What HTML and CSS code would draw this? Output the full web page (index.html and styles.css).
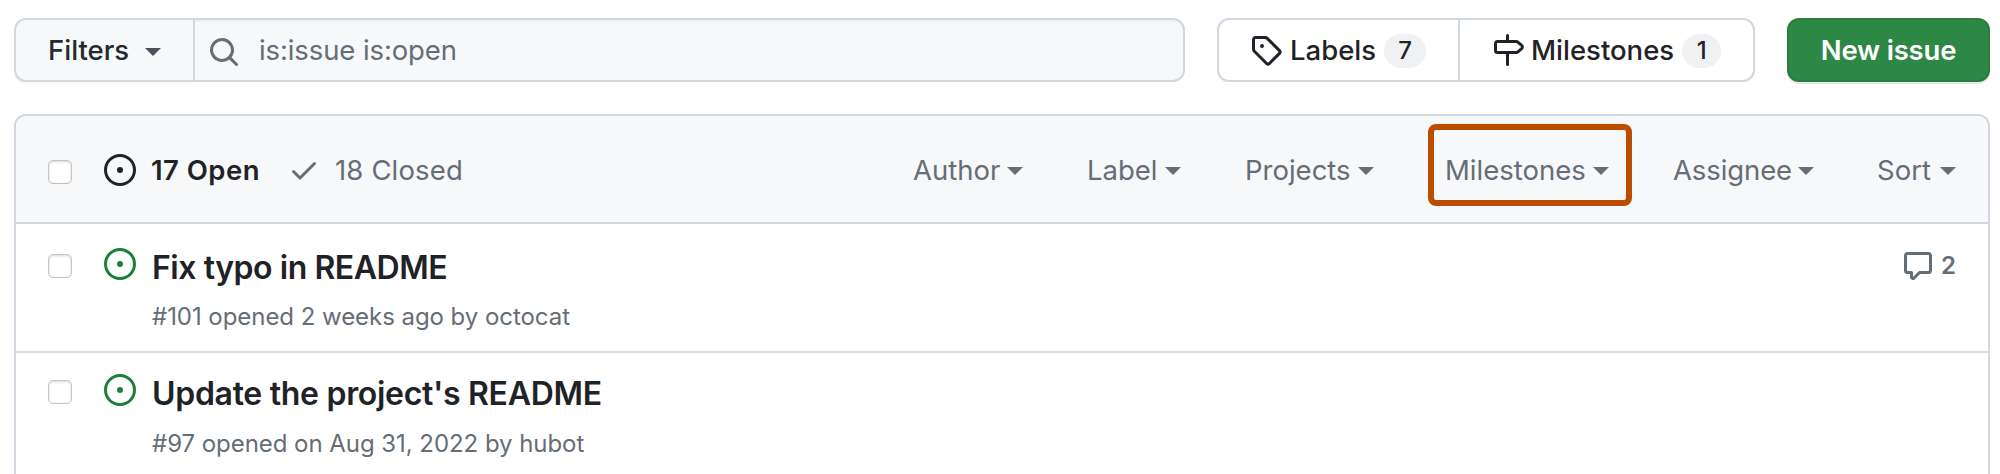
FILE: index.html
```html
<!DOCTYPE html>
<html lang="en">
<head>
<meta charset="utf-8">
<title>Issues</title>
<link rel="stylesheet" href="styles.css">
</head>
<body>
<svg class="sprite" aria-hidden="true">
  <symbol id="issue" viewBox="0 0 16 16"><path d="M8 9.5a1.5 1.5 0 100-3 1.5 1.5 0 000 3z"/><path fill-rule="evenodd" d="M8 0a8 8 0 110 16A8 8 0 018 0zM1.5 8a6.5 6.5 0 1013 0 6.5 6.5 0 00-13 0z"/></symbol>
  <symbol id="caret" viewBox="0 0 16 8"><path d="M0 0h16L8 8z"/></symbol>
</svg>
<div class="toolbar">
  <div class="search">
    <button class="filters"><span class="t-filters">Filters</span><svg class="caret"><use href="#caret"/></svg></button>
    <div class="query">
      <svg class="icon" viewBox="0 0 16 16"><path fill-rule="evenodd" d="M11.5 7a4.5 4.5 0 11-9 0 4.5 4.5 0 019 0zm-.82 4.74a6 6 0 111.06-1.06l3.04 3.04a.75.75 0 11-1.06 1.06l-3.04-3.04z"/></svg>
      <span class="t-query">is:issue is:open</span>
    </div>
  </div>
  <nav class="subnav">
    <a class="sub labels"><svg class="icon" viewBox="0 0 16 16"><path fill-rule="evenodd" d="M2.5 7.775V2.75a.25.25 0 01.25-.25h5.025a.25.25 0 01.177.073l6.25 6.25a.25.25 0 010 .354l-5.025 5.025a.25.25 0 01-.354 0l-6.25-6.25a.25.25 0 01-.073-.177zm-1.5 0V2.75C1 1.784 1.784 1 2.75 1h5.025c.464 0 .91.184 1.238.513l6.25 6.25a1.75 1.75 0 010 2.474l-5.026 5.026a1.75 1.75 0 01-2.474 0l-6.25-6.25A1.75 1.75 0 011 7.775zM6 5a1 1 0 100 2 1 1 0 000-2z"/></svg><span class="sub-text">Labels</span><span class="counter">7</span></a>
    <a class="sub miles"><svg class="icon" viewBox="0 0 16 16"><path fill-rule="evenodd" d="M7.75 0a.75.75 0 01.75.75V3h3.634c.414 0 .814.147 1.13.414l2.07 1.75a1.75 1.75 0 010 2.672l-2.07 1.75a1.75 1.75 0 01-1.13.414H8.5v5.25a.75.75 0 11-1.5 0V10H2.75A1.75 1.75 0 011 8.25v-3.5C1 3.784 1.784 3 2.75 3H7V.75A.75.75 0 017.75 0zm0 8.5h4.384a.25.25 0 00.161-.06l2.07-1.75a.25.25 0 000-.38l-2.07-1.75a.25.25 0 00-.161-.06H2.75a.25.25 0 00-.25.25v3.5c0 .138.112.25.25.25h5z"/></svg><span class="sub-text">Milestones</span><span class="counter one">1</span></a>
  </nav>
  <button class="new">New issue</button>
</div>
<main class="box">
  <header class="head">
    <span class="check"></span>
    <svg class="icon state"><use href="#issue"/></svg>
    <span class="open">17 Open</span>
    <svg class="icon tick" viewBox="0 0 16 16"><path d="M13.78 4.22a.75.75 0 010 1.06l-7.25 7.25a.75.75 0 01-1.06 0L2.22 9.28a.75.75 0 011.06-1.06L6 10.94l6.72-6.72a.75.75 0 011.06 0z"/></svg>
    <span class="closed">18 Closed</span>
    <div class="menus">
      <a class="menu author">Author<svg class="caret"><use href="#caret"/></svg></a>
      <a class="menu label">Label<svg class="caret"><use href="#caret"/></svg></a>
      <a class="menu projects">Projects<svg class="caret"><use href="#caret"/></svg></a>
      <a class="menu milestones">Milestones<svg class="caret"><use href="#caret"/></svg></a>
      <a class="menu assignee">Assignee<svg class="caret"><use href="#caret"/></svg></a>
      <a class="menu sort">Sort<svg class="caret"><use href="#caret"/></svg></a>
    </div>
  </header>
  <article class="row">
    <span class="check"></span>
    <svg class="icon state"><use href="#issue"/></svg>
    <div class="body">
      <h2 class="title fix">Fix typo in README</h2>
      <p class="meta">#101 opened 2 weeks ago by octocat</p>
    </div>
    <div class="comments"><svg class="icon" viewBox="0 0 16 16"><path fill-rule="evenodd" d="M2.75 2.5a.25.25 0 00-.25.25v7.5c0 .138.112.25.25.25h2a.75.75 0 01.75.75v2.19l2.72-2.72a.75.75 0 01.53-.22h4.5a.25.25 0 00.25-.25v-7.5a.25.25 0 00-.25-.25H2.75zM1 2.75C1 1.784 1.784 1 2.75 1h10.5c.966 0 1.75.784 1.75 1.75v7.5A1.75 1.75 0 0113.25 12H9.06l-2.573 2.573A1.457 1.457 0 014 13.543V12H2.75A1.75 1.75 0 011 10.25v-7.5z"/></svg><span>2</span></div>
  </article>
  <article class="row second">
    <span class="check"></span>
    <svg class="icon state"><use href="#issue"/></svg>
    <div class="body">
      <h2 class="title">Update the project's README</h2>
      <p class="meta">#97 opened on Aug 31, 2022 by hubot</p>
    </div>
  </article>
</main>
</body>
</html>
```
FILE: styles.css
```css
*, *::after { box-sizing: border-box; }
body {
  margin: 0;
  padding: 18px 10px 0 14px;
  height: 474px;
  overflow: hidden;
  background: #fff;
  color: #1f2328;
  font: 400 27.5px/40px Inter, "Liberation Sans", sans-serif;
}
.sprite { position: absolute; width: 0; height: 0; }
.icon { width: 32px; height: 32px; flex: none; fill: currentColor; display: block; }
.caret { width: 16px; height: 8px; flex: none; fill: currentColor; display: block; }
button { font: inherit; color: inherit; margin: 0; }

.toolbar { display: flex; height: 64px; white-space: nowrap; }
.search { display: flex; width: 1171px; margin-right: 32px; }
.filters {
  display: flex; align-items: center; justify-content: space-between;
  width: 179px; padding: 0 32px 0 32px;
  font-weight: 500;
  color: #24292f;
  background: #f6f8fa;
  border: 2px solid #d3d8dc; border-right: 0;
  border-radius: 12px 0 0 12px;
  box-shadow: 0 2px 0 rgba(31,35,40,.04);
}
.filters .caret { margin-top: 4px; fill: #4b5156; }
.query {
  display: flex; align-items: center; flex: 1;
  padding-left: 13px; gap: 19px;
  letter-spacing: -.1px;
  color: #656d76;
  background: #f6f8fa;
  border: 2px solid #d0d7de;
  border-radius: 0 12px 12px 0;
  box-shadow: inset 0 2px 0 rgba(208,215,222,.2);
}
.query .icon { margin-top: 4px; }
.subnav {
  display: flex; width: 538px; margin-right: 32px;
  border: 2px solid #d0d7de; border-radius: 12px;
}
.sub { display: flex; align-items: center; font-weight: 500; }
.sub-text { margin-left: 7px; }
.labels { width: 241px; padding-left: 31px; border-right: 2px solid #d0d7de; }
.labels .sub-text { margin-left: 8px; }
.miles { padding-left: 32px; }
.counter {
  margin: 2px 0 0 auto; width: 42px; height: 34px; border-radius: 17px;
  font-size: 24px; line-height: 34px; text-align: center;
  background: #eff1f3;
}
.labels .counter { margin-right: 32px; }
.counter.one { width: 39px; margin-left: 8px; }
.new {
  width: 203px; padding: 0;
  font-weight: 600; color: #fff; letter-spacing: -.2px;
  background: #2d8745;
  border: 2px solid #2a7c40; border-radius: 12px;
  box-shadow: 0 2px 0 rgba(31,35,40,.1);
}

.box {
  margin-top: 32px; height: 360px;
  border: 2px solid #d0d7de; border-bottom: 0; border-radius: 12px 12px 0 0;
  overflow: hidden; white-space: nowrap;
}
.head {
  display: flex; align-items: center;
  height: 108px; padding: 2px 31px 0 32px;
  color: #656d76; background: #f6f8fa;
  border-bottom: 2px solid #d0d7de;
}
.check {
  flex: none; width: 24px; height: 24px;
  border: 1px solid #c4c4c4; border-radius: 5px;
  background: #fff;
  box-shadow: inset 0 1px 3px rgba(0,0,0,.16);
}
.head .check { margin-top: 3px; }
.state { margin-left: 32px; }
.head .state { color: #1f2328; margin-top: -1px; }
.open { margin-left: 15px; width: 120px; font-weight: 600; color: #1f2328; letter-spacing: .45px; }
.tick { margin: 0 0 0 17px; }
.closed { margin-left: 15px; letter-spacing: .15px; }
.menus { display: flex; margin-left: auto; }
.menu { display: flex; align-items: center; justify-content: space-between; position: relative; }
.menu .caret { margin-top: 2px; }
.author { width: 110px; margin-right: 64px; }
.label { width: 94px; margin-right: 64px; }
.projects { width: 129px; margin-right: 71px; }
.milestones { width: 164px; margin-right: 64px; }
.assignee { width: 141px; margin-right: 63px; letter-spacing: -.1px; }
.sort { width: 79px; margin-right: 1px; }
/* highlight frame around the Milestones menu */
.milestones::after {
  content: ""; position: absolute; left: -17px; top: -26px;
  width: 204px; height: 82px;
  border: 6px solid #bc4c00; border-radius: 8px;
}
.row { display: flex; align-items: flex-start; height: 127px; padding: 24px 31px 0 32px; }
.row.second { border-top: 2px solid #d8dee4; padding-top: 21px; }
.row .check { margin-top: 6px; }
.row .state { color: #1a7f37; }
.body { margin-left: 16px; }
.title { margin: 0; font-size: 32px; line-height: 40px; font-weight: 600; letter-spacing: -.3px; }
.title.fix { letter-spacing: -.45px; }
.meta { margin: 11px 0 0; font-size: 24px; line-height: 36px; color: #656d76; letter-spacing: -.05px; }
.second .meta { margin-top: 12px; }
.comments {
  display: flex; margin: 2px 1px 0 auto; gap: 7px;
  color: #656d76; font-size: 24px; line-height: 32px; font-weight: 600;
}
```
